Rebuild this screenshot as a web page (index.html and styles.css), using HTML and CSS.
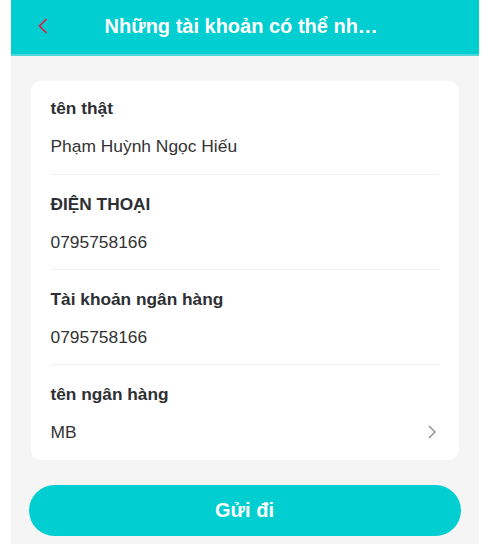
FILE: index.html
```html
<!DOCTYPE html>
<html lang="vi">
<head>
<meta charset="utf-8">
<title>Những tài khoản có thể nhận</title>
<link rel="stylesheet" href="styles.css">
</head>
<body>
<div class="page">
  <header class="navbar">
    <button class="back" aria-label="back">
      <svg width="12" height="18" viewBox="0 0 12 18"><path d="M9.5 2 L2.5 9 L9.5 16" fill="none" stroke="#f0143c" stroke-width="1.6"/></svg>
    </button>
    <h1 class="title">Những tài khoản có thể nh…</h1>
  </header>
  <main class="content">
    <section class="card">
      <div class="field first">
        <div class="label">tên thật</div>
        <div class="value">Phạm Huỳnh Ngọc Hiếu</div>
      </div>
      <div class="field">
        <div class="label">ĐIỆN THOẠI</div>
        <div class="value">0795758166</div>
      </div>
      <div class="field">
        <div class="label">Tài khoản ngân hàng</div>
        <div class="value">0795758166</div>
      </div>
      <div class="field last">
        <div class="label">tên ngân hàng</div>
        <div class="value row">
          <span>MB</span>
          <svg class="chev" width="10" height="16" viewBox="0 0 10 16"><path d="M2 2 L8 8 L2 14" fill="none" stroke="#8c8c96" stroke-width="1.4"/></svg>
        </div>
      </div>
    </section>
    <button class="submit">Gửi đi</button>
  </main>
</div>
</body>
</html>
```
FILE: styles.css
```css
* { box-sizing: border-box; }
html, body { margin: 0; padding: 0; background: #fff; }
body { font-family: "Liberation Sans", Arial, sans-serif; }
.page {
  width: 468px;
  height: 544px;
  margin: 0 auto;
  background: #f5f5f5;
  overflow: hidden;
}
.navbar {
  height: 56px;
  background: #00ced1;
  border-bottom: 2px solid #4fd8da;
  display: flex;
  align-items: center;
  padding: 0 20px 0 26px;
}
.back {
  width: 12px;
  height: 18px;
  padding: 0;
  border: 0;
  background: none;
  display: flex;
  margin-top: -2px;
}
.title {
  flex: 1;
  margin: -2px 0 0 56px;
  font-size: 20px;
  font-weight: bold;
  color: #fff;
  white-space: nowrap;
}
.content {
  padding: 25px 0 0;
}
.card {
  margin: 0 20px;
  background: #fff;
  border-radius: 10px;
  padding: 0 20px;
}
.field {
  padding: 16px 0 14px;
  border-bottom: 1px solid #f0f0f0;
}
.field.first { padding: 14px 0 15px; }
.field.last { border-bottom: 0; padding-bottom: 15px; }
.label {
  font-size: 17.3px;
  line-height: 26px;
  font-weight: bold;
  color: #2d2f33;
}
.value {
  margin-top: 12px;
  font-size: 17.4px;
  line-height: 26px;
  color: #333;
}
.row {
  display: flex;
  justify-content: space-between;
  align-items: center;
}
.chev { margin-right: 2px; }
.submit {
  display: block;
  width: 432px;
  height: 51px;
  margin: 25px 0 0 18px;
  border: 0;
  border-radius: 26px;
  background: #00ced1;
  color: #fff;
  font-family: "Liberation Sans", Arial, sans-serif;
  font-size: 20px;
  font-weight: bold;
}
```
